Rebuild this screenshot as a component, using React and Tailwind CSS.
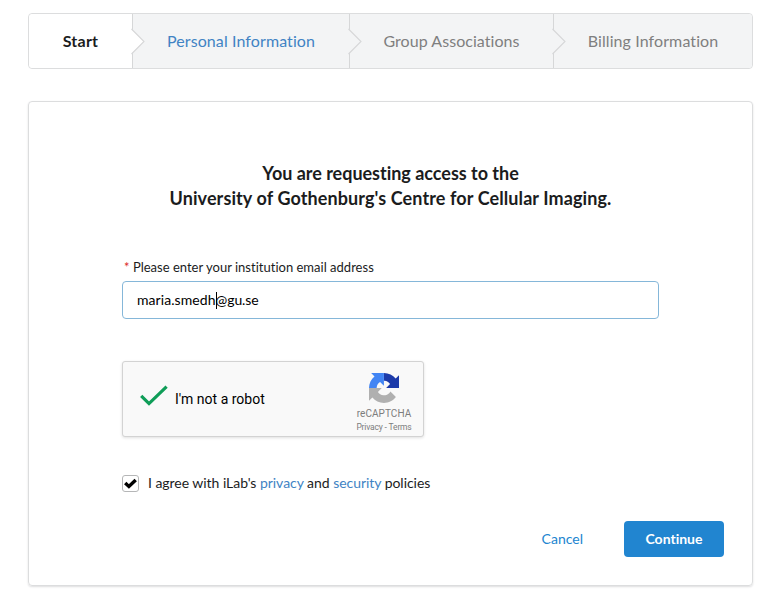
const steps = [
  { label: 'Start', cell: 'w-[104px] bg-white', text: 'font-bold text-[#1b1c1d] tracking-[0.25px]', arrow: '#ffffff' },
  { label: 'Personal Information', cell: 'w-[217px] bg-[#f3f4f5]', text: 'text-[#4183c4] tracking-[0.1px]', arrow: '#f3f4f5' },
  { label: 'Group Associations', cell: 'w-[204px] bg-[#f3f4f5]', text: 'text-[#7f7f7f] tracking-[0.05px]', arrow: '#f3f4f5' },
  { label: 'Billing Information', cell: 'w-[198px] bg-[#f3f4f5]', text: 'text-[#7f7f7f] tracking-[0.1px]', arrow: null },
];

function Steps() {
  return (
    <nav className="flex h-14 w-[725px] rounded border border-[#dcddde]">
      {steps.map((s, i) => (
        <div
          key={s.label}
          className={`relative flex items-center justify-center text-base leading-5 ${s.cell} ${s.text} ${
            i === 0 ? 'rounded-l' : i === 3 ? 'rounded-r' : ''
          } ${s.arrow ? 'border-r border-[#d6d7d8]' : ''}`}
        >
          <span className="whitespace-nowrap">{s.label}</span>
          {s.arrow && (
            <svg className="absolute -right-[14px] top-[14px] z-10" width="15" height="27" viewBox="0 0 15 27">
              <path d="M0 1.5h1L13 13.5L1 25.5H0Z" fill={s.arrow} />
              <path d="M.5 1L13 13.5L.5 26" fill="none" stroke="#d6d7d8" strokeWidth="1.1" />
            </svg>
          )}
        </div>
      ))}
    </nav>
  );
}

function CaptchaLogo() {
  return (
    <svg width="30" height="30" viewBox="0 0 64 64">
      <path d="M64 31.955V4.687l-7.16 7.16C50.942 4.674 42.033.093 32.052.093L31.9 16.3c.485 0 .86.057 1.135.163 4.976.393 9.288 3.14 11.828 7.124l-8.307 8.307L64 31.955" fill="#1c3aa9" />
      <path d="M31.862.094H4.594l7.16 7.16C4.58 13.15 0 22.06 0 32.04l16.26 0c0-.485.057-.86.163-1.135.393-4.976 3.14-9.288 7.124-11.828l8.307 8.307L31.862.094" fill="#4285f4" />
      <path d="M0 32.044v27.268l7.16-7.16c5.86 7.173 14.774 11.754 24.755 11.754 10.387 0 19.614-4.96 25.458-12.64L45.674 39.406a15.55 15.55 0 0 1-4.754 5.334c-2.05 1.6-4.952 2.906-8.968 2.906-.485 0-.86-.057-1.135-.163-4.976-.393-9.288-3.14-11.828-7.124l8.307-8.307L0 32.044" fill="#b0b0b0" />
    </svg>
  );
}

function Captcha() {
  return (
    <div className="mt-[42px] flex h-[76px] w-[302px] rounded-[3px] border border-[#d3d3d3] bg-[#f9f9f9] font-['Roboto',sans-serif] shadow-[0_1px_3px_rgba(0,0,0,0.12)]">
      <svg className="ml-4 mt-[22px]" width="30" height="24" viewBox="0 0 30 24">
        <path d="M2.2 11.8L10 19.6L27.6 2.6" fill="none" stroke="#0f9d58" strokeWidth="3.2" />
      </svg>
      <span className="ml-1.5 mt-[27px] whitespace-nowrap text-sm leading-5 text-black">I'm not a robot</span>
      <div className="ml-auto mr-[7px] mt-[11px] flex w-[64px] flex-col items-center">
        <CaptchaLogo />
        <span className="mt-[5px] text-[10px] leading-3 text-[#7d7d7d] tracking-[0.05px]">reCAPTCHA</span>
        <span className="mt-[2px] whitespace-nowrap text-[8.5px] leading-[10px] tracking-[-0.17px] text-[#7d7d7d]">Privacy - Terms</span>
      </div>
    </div>
  );
}

export default function App() {
  return (
    <main className="h-[597px] w-[772px] overflow-hidden bg-white pl-7 pt-[13px] font-['Lato',sans-serif] text-sm text-[#1b1c1d] [font-variant-ligatures:none]">
      <Steps />
      <section className="mt-8 flex h-[485px] w-[725px] flex-col rounded border border-[#dcddde] px-[93px] pt-[59px] shadow-[0_1px_2px_rgba(34,36,38,0.15)]">
        <h1 className="-mx-10 text-center text-lg font-bold leading-[25px]">
          <span className="tracking-[-0.02px]">You are requesting access to the</span>
          <br />
          <span className="tracking-[0.1px]">University of Gothenburg's Centre for Cellular Imaging.</span>
        </h1>
        <label className="mt-[46px] pl-[2px] text-[13px] leading-5 tracking-[0.01px]">
          <span className="text-[#db2828]">*</span> Please enter your institution email address
        </label>
        <div className="mt-[4px] flex h-[38px] w-[537px] items-center rounded border border-[#85b7d9] pl-[14px] text-[14px] text-black">
          <span className="tracking-[0.07px]">maria.smedh</span>
          <span className="-mr-px h-[17px] w-px bg-black" />
          <span className="tracking-[-0.1px]">@gu.se</span>
        </div>
        <Captcha />
        <div className="mt-9 flex h-5 items-center">
          <span className="flex h-[17px] w-[17px] items-center justify-center rounded-[3px] border border-[#b5b6b7]">
            <svg width="13" height="11" viewBox="0 0 13 11">
              <path d="M1.2 5L4.9 8.4L11.7 1.9" fill="none" stroke="#000" strokeWidth="3.4" />
            </svg>
          </span>
          <span className="ml-[9px] whitespace-nowrap tracking-[-0.04px]">
            I agree with iLab's <a className="text-[#4183c4]">privacy</a> and <a className="text-[#4183c4]">security</a> policies
          </span>
        </div>
        <div className="-mr-[65px] mt-7 flex items-center justify-end">
          <button className="mr-[41px] text-[#2185d0]">Cancel</button>
          <button className="h-9 w-[100px] rounded bg-[#2185d0] font-bold text-white">Continue</button>
        </div>
      </section>
    </main>
  );
}
